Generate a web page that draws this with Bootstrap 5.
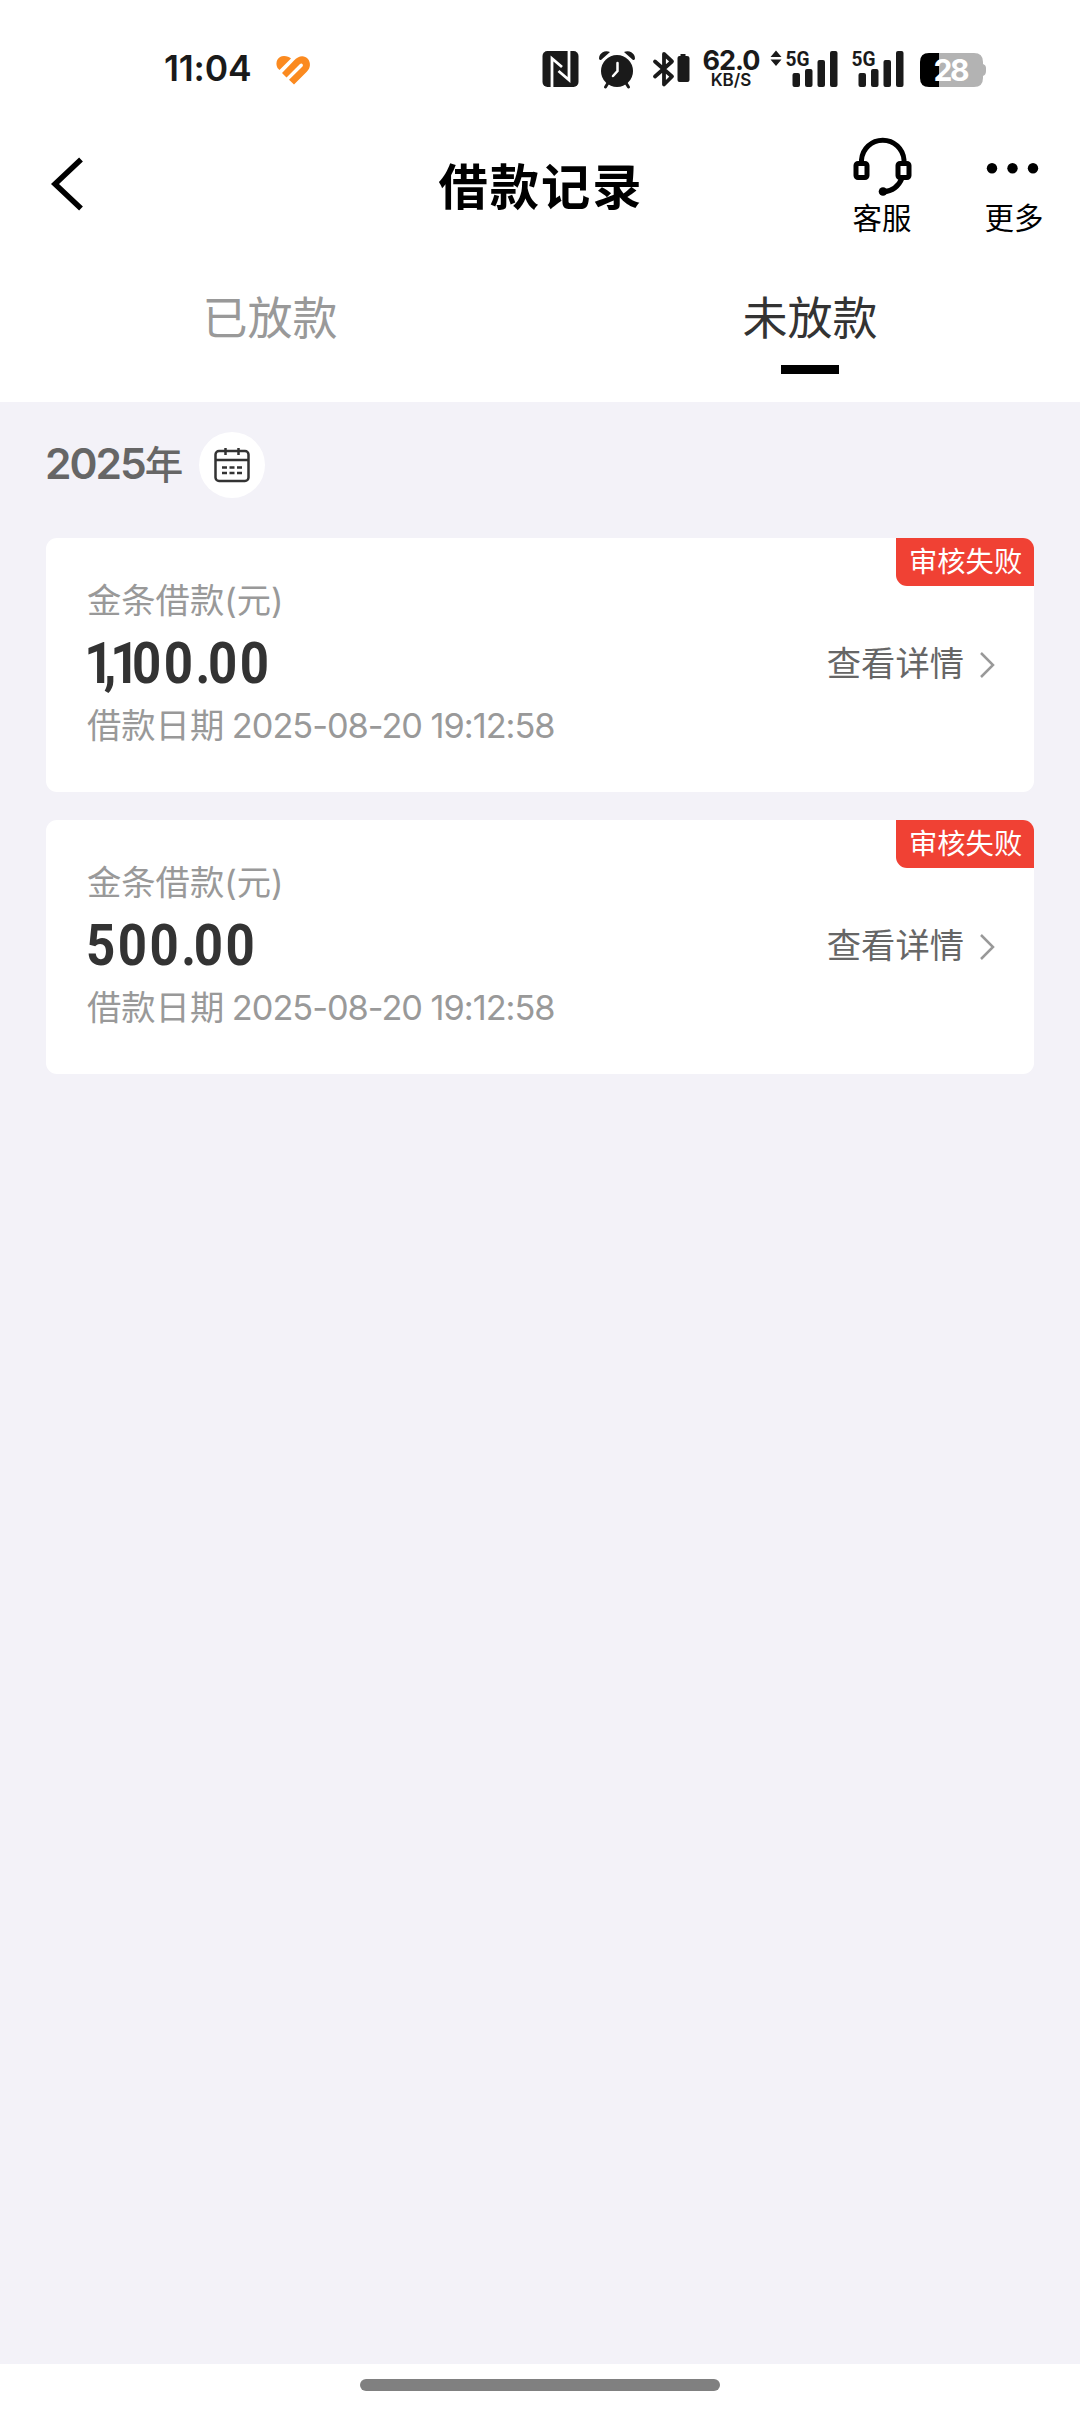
<!DOCTYPE html>
<html lang="zh-CN">
<head>
<meta charset="utf-8">
<meta name="viewport" content="width=device-width, initial-scale=1">
<title>借款记录</title>
<link href="https://cdn.jsdelivr.net/npm/bootstrap@5.3.0/dist/css/bootstrap.min.css" rel="stylesheet">
<style>
  body { font-family: Inter, "Noto Sans CJK SC", sans-serif; background: #f3f2f8; }
  .screen { width: 1080px; height: 2412px; }
  svg { display: block; flex: none; overflow: visible; }

  .status-bar { height: 116px; padding: 50px 94px 0 164px; color: #1a1a1a; }
  .clock { font-size: 35.5px; font-weight: 600; line-height: 38px; width: 112px; letter-spacing: -.2px; }
  .g-alarm { margin-left: 19px; }
  .g-bt { margin-left: 16px; }
  .rate { margin-left: 11px; width: 60px; font-weight: 700; line-height: 1; text-align: center; white-space: nowrap; }
  .rate-num { font-size: 27px; line-height: 22px; letter-spacing: -1px; }
  .rate-unit { font-size: 17px; line-height: 17px; font-weight: 600; }
  .g-sig1 { margin-left: 9px; }
  .g-sig2 { margin-left: 14px; }
  .g-batt { margin-left: 16px; }

  .title-bar { height: 144px; padding: 18px 36px 0 50px; color: #000; }
  .back-btn { padding-top: 22px; width: 218px; }
  .page-title { font-size: 49.3px; letter-spacing: 2px; line-height: 60px; padding-top: 23px; }
  .tool-area { width: 230px; gap: 72px; }
  .tool-text { font-size: 29.5px; line-height: 36px; white-space: nowrap; }

  .tab-row { height: 142px; }
  .tab-link { font-size: 45px; line-height: 60px; color: #999; padding-top: 29px; }
  .tab-link.active { color: #333; }
  .tab-mark { width: 58px; height: 9px; background: #000; margin-top: 16px; }

  .list-area { padding: 30px 46px 0; }
  .year { font-size: 42.5px; font-weight: 600; color: #666; line-height: 66px; margin-top: -1px; }
  .year-num { letter-spacing: -2px; margin-left: -1px; }
  .year-han { font-size: 38.5px; font-weight: 500; }
  .cal-btn { width: 66px; height: 66px; margin-left: 16px; }
  .loan { height: 254px; border-radius: 11px; padding: 0 38px 0 41px; }
  .year-row { height: 66px; margin-bottom: 40px; }
  .loan-list { gap: 28px; }
  .tag-fail { background: #f04134; color: #fff; font-size: 28.3px; line-height: 49px; width: 138px; height: 48px; padding-left: 13px; border-radius: 0 11px 0 11px; white-space: nowrap; }
  .loan-info { padding-bottom: 3px; }
  .grey-line { font-size: 34.3px; line-height: 44px; color: #999; white-space: nowrap; }
  .stamp { font-size: 34.3px; letter-spacing: -1px; margin-left: -2px; }
  .amount { font-family: Roboto, sans-serif; font-weight: 700; font-size: 58px; line-height: 62px; letter-spacing: 2.8px; margin: 9px 0 10px -1px; color: #333; white-space: nowrap; transform: scaleX(.88); transform-origin: left; }
  .narrow-one { letter-spacing: -8.6px; }
  .narrow-comma { letter-spacing: -7px; }
  .narrow-dot { letter-spacing: -2.5px; }
  .lead-one { margin-left: -2px; letter-spacing: -11px; }
  .detail { font-size: 34.3px; line-height: 44px; color: #666; gap: 15px; }
  .detail span { margin-top: -2px; }

  .home-bar { height: 48px; }
  .home-pill { width: 360px; height: 12px; background: #808080; margin-top: 15px; }
</style>
<script src="https://cdn.jsdelivr.net/npm/bootstrap@5.3.0/dist/js/bootstrap.bundle.min.js"></script>
</head>
<body>
<div class="screen d-flex flex-column overflow-hidden">
  <header class="bg-white">
    <div class="status-bar d-flex align-items-start">
      <div class="clock">11:04</div>
      <svg width="34" height="38" viewBox="0 0 34 38"><g fill="#fb8a20"><path d="M1.500 18C-1.500 12 2 6 8 6 11 6 13.500 7 15 8.500L3.500 20Z"/><path d="M6 23 18 10.500C22 6 28 4.500 32 9 35 13 34.500 18 31 21.500L18 34.500 13 29.700 26.500 16.500C28 14.500 25.500 12.500 24 14L10.500 27.500Z"/></g></svg>
      <div class="d-flex align-items-start ms-auto">
        <svg width="37" height="38" viewBox="0 0 37 38"><rect x=".5" y="1" width="36" height="36" rx="5" fill="#1a1a1a"/><path d="M10 37V8.500L20 17M27 1V30L16.500 21" fill="none" stroke="#fff" stroke-width="2.800"/></svg>
        <svg class="g-alarm" width="38" height="38" viewBox="0 0 38 38"><g fill="#1a1a1a"><circle cx="19" cy="21" r="16"/><path d="M1 8.500A7.500 7.500 0 0 1 12 2L3 10Q1.500 10.500 1 8.500ZM37 8.500A7.500 7.500 0 0 0 26 2L35 10Q36.500 10.500 37 8.500Z"/></g><path d="M10 33 7.500 37M28 33 30.500 37" stroke="#1a1a1a" stroke-width="3" stroke-linecap="round"/><path d="M19.500 13V21L15 26" fill="none" stroke="#fff" stroke-width="2.500" stroke-linecap="round"/></svg>
        <svg class="g-bt" width="38" height="38" viewBox="0 0 38 38"><path d="M3 11.500 20 26.500 12 34.500V4L20 11.500 3 26.500" fill="none" stroke="#1a1a1a" stroke-width="3.800" stroke-linejoin="round" stroke-linecap="round"/><path d="M28.500 4h5v2h1.500q2.500 0 2.500 2V30q0 2-2 2H27.500q-2 0-2-2V8q0-2 2-2h1Z" fill="#1a1a1a"/></svg>
        <div class="rate"><div class="rate-num">62.0</div><div class="rate-unit">KB/S</div></div>
        <svg class="g-sig1" width="68" height="38" viewBox="0 0 68 38"><g fill="#1a1a1a"><path d="M.5 7 6 .5 11.500 7ZM.5 9.500 6 16 11.500 9.500Z"/><rect x="22.500" y="23" width="7.500" height="14" rx="2"/><rect x="35" y="19" width="7.500" height="18" rx="2"/><rect x="47.500" y="10" width="7.500" height="27" rx="2"/><rect x="60" y="1" width="7.500" height="36" rx="2"/><text x="15.500" y="15.500" font-family="Roboto, sans-serif" font-weight="700" font-size="20.500" textLength="24" lengthAdjust="spacingAndGlyphs">5G</text></g></svg>
        <svg class="g-sig2" width="52" height="38" viewBox="16 0 52 38"><g fill="#1a1a1a"><rect x="22.500" y="23" width="7.500" height="14" rx="2"/><rect x="35" y="19" width="7.500" height="18" rx="2"/><rect x="47.500" y="10" width="7.500" height="27" rx="2"/><rect x="60" y="1" width="7.500" height="36" rx="2"/><text x="15.500" y="15.500" font-family="Roboto, sans-serif" font-weight="700" font-size="20.500" textLength="24" lengthAdjust="spacingAndGlyphs">5G</text></g></svg>
        <svg class="g-batt" width="66" height="38" viewBox="0 0 66 38"><path d="M9 3H54Q63 3 63 12V14Q66 15 66 18V21Q66 25 63 26V28Q63 37 54 37H9Z" fill="#b3b3b3"/><path d="M19 3H9Q0 3 0 12V28Q0 37 9 37H19Z" fill="#000"/><text x="13.500" y="31" fill="#fff" font-family="Inter, sans-serif" font-weight="700" font-size="30" textLength="36">28</text></svg>
      </div>
    </div>

    <div class="title-bar d-flex justify-content-between align-items-start">
      <div class="back-btn"><svg width="36" height="56" viewBox="0 0 36 56"><path d="M31 3.500 5 28 31 52.500" fill="none" stroke="#000" stroke-width="5.500"/></svg></div>
      <h1 class="page-title fw-bold mb-0">借款记录</h1>
      <div class="tool-area d-flex justify-content-end">
        <div class="d-flex flex-column align-items-center">
          <svg width="60" height="66" viewBox="0 0 60 66"><g fill="none" stroke="#000" stroke-width="5"><path d="M9.500 29V26A21.300 21.300 0 0 1 52 26V29"/><rect x="4" y="29.500" width="11" height="14" rx="2"/><rect x="46" y="29.500" width="11" height="14" rx="2"/><path d="M50.500 43Q45 57 31 58"/></g><circle cx="31" cy="57.500" r="4.300"/></svg>
          <div class="tool-text">客服</div>
        </div>
        <div class="d-flex flex-column align-items-center">
          <svg width="60" height="66" viewBox="0 0 60 66"><circle cx="8" cy="34.300" r="5.200"/><circle cx="28.500" cy="34.300" r="5.200"/><circle cx="49" cy="34.300" r="5.200"/></svg>
          <div class="tool-text">更多</div>
        </div>
      </div>
    </div>

    <nav class="tab-row row g-0">
      <div class="tab-link col-6 text-center">已放款</div>
      <div class="tab-link active col-6 d-flex flex-column align-items-center">未放款<span class="tab-mark"></span></div>
    </nav>
  </header>

  <main class="list-area flex-grow-1">
    <div class="year-row d-flex align-items-center">
      <div class="year"><span class="year-num">2025</span><span class="year-han">年</span></div>
      <div class="cal-btn bg-white rounded-circle d-flex align-items-center justify-content-center">
        <svg width="36" height="36" viewBox="0 0 36 36"><g fill="none" stroke="#333" stroke-width="2.500"><rect x="1.500" y="4" width="33" height="30" rx="3.500"/><path d="M1.500 13H34.500M11.500 1V8M24.500 1V8" /><path d="M8 20.500h5M15.500 20.500h5M23 20.500h5M8 26h5M15.500 26h5M23 26h5"/></g></svg>
      </div>
    </div>

    <div class="loan-list d-flex flex-column">
      <section class="loan bg-white position-relative d-flex justify-content-between align-items-center">
        <div class="loan-info">
          <div class="grey-line">金条借款(元)</div>
          <div class="amount"><span class="narrow-one lead-one">1</span><span class="narrow-comma">,</span><span class="narrow-one">1</span>00<span class="narrow-dot">.</span>00</div>
          <div class="grey-line">借款日期 <span class="stamp">2025-08-20 19:12:58</span></div>
        </div>
        <div class="detail d-flex align-items-center"><span>查看详情</span><svg width="17" height="28" viewBox="0 0 17 28"><path d="M2 2 14 14 2 26" fill="none" stroke="#999" stroke-width="2.500"/></svg></div>
        <span class="tag-fail position-absolute top-0 end-0">审核失败</span>
      </section>
      <section class="loan bg-white position-relative d-flex justify-content-between align-items-center">
        <div class="loan-info">
          <div class="grey-line">金条借款(元)</div>
          <div class="amount">500<span class="narrow-dot">.</span>00</div>
          <div class="grey-line">借款日期 <span class="stamp">2025-08-20 19:12:58</span></div>
        </div>
        <div class="detail d-flex align-items-center"><span>查看详情</span><svg width="17" height="28" viewBox="0 0 17 28"><path d="M2 2 14 14 2 26" fill="none" stroke="#999" stroke-width="2.500"/></svg></div>
        <span class="tag-fail position-absolute top-0 end-0">审核失败</span>
      </section>
    </div>
  </main>

  <footer class="home-bar bg-white d-flex justify-content-center"><div class="home-pill rounded-pill"></div></footer>
</div>
</body>
</html>
